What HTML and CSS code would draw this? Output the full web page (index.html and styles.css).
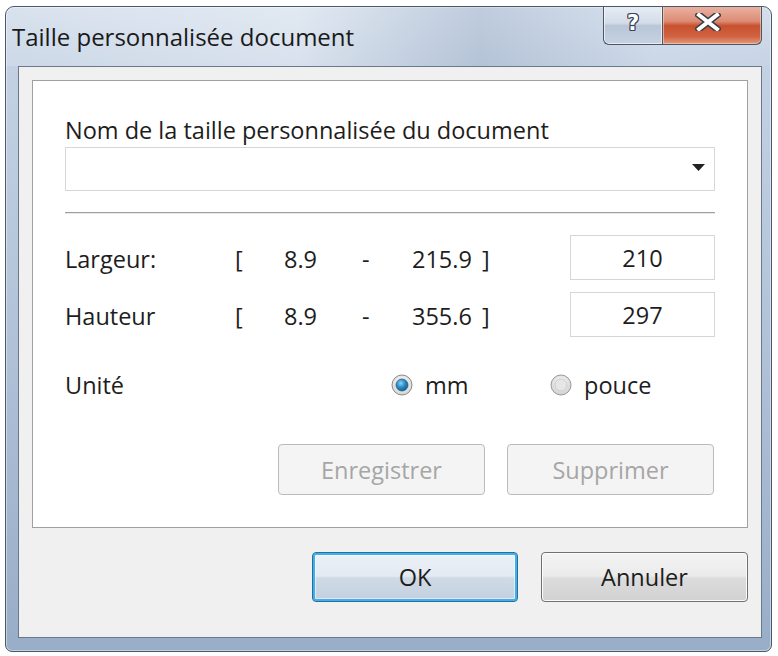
FILE: index.html
```html
<!DOCTYPE html>
<html lang="fr">
<head>
<meta charset="utf-8">
<title>Taille personnalisée document</title>
<link rel="stylesheet" href="styles.css">
</head>
<body>
<div class="window">
  <div class="titlebar">
    <div class="title">Taille personnalisée document</div>
    <div class="caption-buttons">
      <div class="cap-btn help"><span class="qmark">?</span></div>
      <div class="cap-btn close">
        <svg width="26" height="18" viewBox="0 0 26 18">
          <path d="M4 2 L22 16 M22 2 L4 16" stroke="#3d3f47" stroke-width="7" stroke-linecap="square" fill="none"/>
          <path d="M4 2 L22 16 M22 2 L4 16" stroke="#ffffff" stroke-width="4" stroke-linecap="square" fill="none"/>
        </svg>
      </div>
    </div>
  </div>
  <div class="client">
    <div class="panel">
      <div class="label">Nom de la taille personnalisée du document</div>
      <div class="combo">
        <svg class="arrow" width="13" height="7" viewBox="0 0 13 7"><path d="M0 0 H13 L6.5 7 Z" fill="#222"/></svg>
      </div>
      <div class="sep"></div>
      <div class="dims">
        <div class="cell">Largeur:</div>
        <div class="cell">[</div>
        <div class="cell">8.9</div>
        <div class="cell">-</div>
        <div class="cell">215.9</div>
        <div class="cell">]</div>
        <div class="field">210</div>

        <div class="cell">Hauteur</div>
        <div class="cell">[</div>
        <div class="cell">8.9</div>
        <div class="cell">-</div>
        <div class="cell">355.6</div>
        <div class="cell">]</div>
        <div class="field">297</div>
      </div>
      <div class="unit-row">
        <div class="unit-label">Unité</div>
        <div class="radio-opt mm">
          <svg class="radio" width="22" height="22" viewBox="0 0 22 22">
            <defs>
              <radialGradient id="rbg" cx="50%" cy="40%" r="60%">
                <stop offset="0" stop-color="#ffffff"/>
                <stop offset="1" stop-color="#d4d4d4"/>
              </radialGradient>
              <radialGradient id="dot" cx="40%" cy="35%" r="70%">
                <stop offset="0" stop-color="#8fd3f5"/>
                <stop offset="0.5" stop-color="#2a8cc4"/>
                <stop offset="1" stop-color="#145a8a"/>
              </radialGradient>
            </defs>
            <circle cx="11" cy="11" r="10" fill="url(#rbg)" stroke="#8a8a8a" stroke-width="1"/>
            <circle cx="11" cy="11" r="6" fill="url(#dot)" stroke="#2b5f86" stroke-width="0.8"/>
          </svg>
          <span>mm</span>
        </div>
        <div class="radio-opt">
          <svg class="radio" width="22" height="22" viewBox="0 0 22 22">
            <defs>
              <radialGradient id="rbg2" cx="50%" cy="40%" r="60%">
                <stop offset="0" stop-color="#ffffff"/>
                <stop offset="1" stop-color="#cfcfcf"/>
              </radialGradient>
            </defs>
            <circle cx="11" cy="11" r="10" fill="url(#rbg2)" stroke="#9a9a9a" stroke-width="1"/>
            <circle cx="11" cy="11" r="6" fill="#e6e6e6" stroke="#c6c6c6" stroke-width="0.8"/>
          </svg>
          <span>pouce</span>
        </div>
      </div>
      <div class="action-row">
        <div class="btn disabled">Enregistrer</div>
        <div class="btn disabled">Supprimer</div>
      </div>
    </div>
    <div class="footer">
      <div class="btn default">OK</div>
      <div class="btn normal">Annuler</div>
    </div>
  </div>
</div>
</body>
</html>
```
FILE: styles.css
```css
html, body {
  margin: 0;
  padding: 0;
  background: #ffffff;
}
body {
  font-family: "Open Sans", "Noto Sans", sans-serif;
  color: #1d1d1d;
}
.window {
  box-sizing: border-box;
  width: 767px;
  height: 646px;
  margin: 6px 0 0 5px;
  border: 1px solid #4a5869;
  border-radius: 9px 9px 7px 7px;
  background: linear-gradient(to bottom, #d2ddeb 0px, #c3d1e3 60px, #b2c3d9 320px, #98adc8 100%);
  box-shadow: inset 0 0 0 1px rgba(255,255,255,0.45);
  display: flex;
  flex-direction: column;
  overflow: hidden;
}
.titlebar {
  height: 59px;
  display: flex;
  align-items: flex-start;
  background: linear-gradient(to right, rgba(255,255,255,0.15) 0%, rgba(255,255,255,0.35) 38%, rgba(110,130,160,0.18) 62%, rgba(255,255,255,0.12) 85%, rgba(255,255,255,0.05) 100%);
}
.title {
  padding: 15px 0 0 6px;
  font-size: 24px;
  line-height: 30px;
  color: #1a1a1a;
  white-space: nowrap;
}
.caption-buttons {
  margin-left: auto;
  margin-right: 9px;
  margin-top: -1px;
  display: flex;
  height: 39px;
}
.cap-btn {
  box-sizing: border-box;
  height: 39px;
  border: 1px solid #4b5667;
  border-top: none;
  display: flex;
  justify-content: center;
  align-items: flex-start;
  padding-top: 5px;
}
.help {
  width: 59px;
  border-right: none;
  border-radius: 0 0 0 6px;
  background: linear-gradient(to bottom, #e7edf5 0%, #d3dce8 45%, #b9c6d8 52%, #c6d2e2 100%);
  box-shadow: inset 0 0 0 1px rgba(255,255,255,0.6);
}
.qmark {
  font-family: "DejaVu Sans", sans-serif;
  font-weight: bold;
  font-size: 21px;
  line-height: 24px;
  color: #ffffff;
  text-shadow: 1px 0 0 #3d4656, -1px 0 0 #3d4656, 0 1px 0 #3d4656, 0 -1px 0 #3d4656, 1px 1px 0 #3d4656, -1px -1px 0 #3d4656, 1px -1px 0 #3d4656, -1px 1px 0 #3d4656;
}
.close {
  width: 100px;
  border-radius: 0 0 6px 0;
  background: linear-gradient(to bottom, #eab3a3 0%, #dd8c75 40%, #c8512e 52%, #d06242 80%, #e29a7c 100%);
  box-shadow: inset 0 0 0 1px rgba(255,220,200,0.55);
  padding-top: 7px;
  padding-right: 8px;
}
.client {
  box-sizing: border-box;
  height: 572px;
  margin: 0 9px 0 12px;
  border: 1px solid #6b7888;
  background: #f0f0f0;
  padding: 13px;
  display: flex;
  flex-direction: column;
}
.panel {
  box-sizing: border-box;
  height: 448px;
  background: #ffffff;
  border: 1px solid #a0a0a0;
  padding: 34px 32px 0 32px;
  display: flex;
  flex-direction: column;
  font-size: 23.5px;
  line-height: 30px;
}
.label {
  height: 30px;
  white-space: nowrap;
}
.combo {
  box-sizing: border-box;
  margin-top: 2px;
  height: 44px;
  border: 1px solid #d6d6d6;
  display: flex;
  justify-content: flex-end;
  align-items: center;
  padding-right: 9px;
}
.arrow {
  display: block;
  margin-top: -3px;
}
.sep {
  margin-top: 21px;
  height: 1px;
  background: #9f9f9f;
  border-bottom: 1px solid #e8e8e8;
}
.dims {
  margin-top: 21px;
  display: grid;
  grid-template-columns: 170px 49px 78px 50px 70px 1fr 145px;
  grid-template-rows: 45px 45px;
  row-gap: 12px;
}
.cell {
  padding-top: 9px;
  white-space: nowrap;
}
.field {
  box-sizing: border-box;
  border: 1px solid #d6d6d6;
  text-align: center;
  line-height: 43px;
  padding-top: 1px;
}
.unit-row {
  margin-top: 33px;
  height: 30px;
  display: flex;
  align-items: center;
}
.unit-label {
  width: 326px;
}
.radio-opt {
  display: flex;
  align-items: center;
}
.radio-opt.mm {
  width: 159px;
}
.radio {
  display: block;
  margin-right: 12px;
  margin-top: -1px;
}
.action-row {
  margin-top: 44px;
  display: flex;
  justify-content: flex-end;
  gap: 22px;
  padding-right: 1px;
}
.btn {
  box-sizing: border-box;
  width: 207px;
  height: 51px;
  border-radius: 4px;
  display: flex;
  justify-content: center;
  align-items: center;
  font-size: 23.5px;
  line-height: 30px;
}
.btn.disabled {
  border: 1px solid #b8bcbf;
  background: #f4f4f4;
  color: #a6a6a6;
}
.footer {
  margin-top: 24px;
  display: flex;
  justify-content: flex-end;
  gap: 23px;
}
.footer .btn {
  height: 50px;
  color: #1d1d1d;
}
.btn.default {
  width: 206px;
  border: 1px solid #2a6c9c;
  background: linear-gradient(to bottom, #ecf1f6 0%, #e3eaf2 48%, #cfdae6 52%, #c3d0df 100%);
  box-shadow: inset 0 0 0 2px #3fb1ea, inset 0 0 0 3px rgba(255,255,255,0.5);
}
.btn.normal {
  border: 1px solid #707070;
  background: linear-gradient(to bottom, #f3f3f3 0%, #ebebeb 48%, #dddddd 52%, #d1d1d1 100%);
  box-shadow: inset 0 0 0 1px #fbfbfb;
}
```
